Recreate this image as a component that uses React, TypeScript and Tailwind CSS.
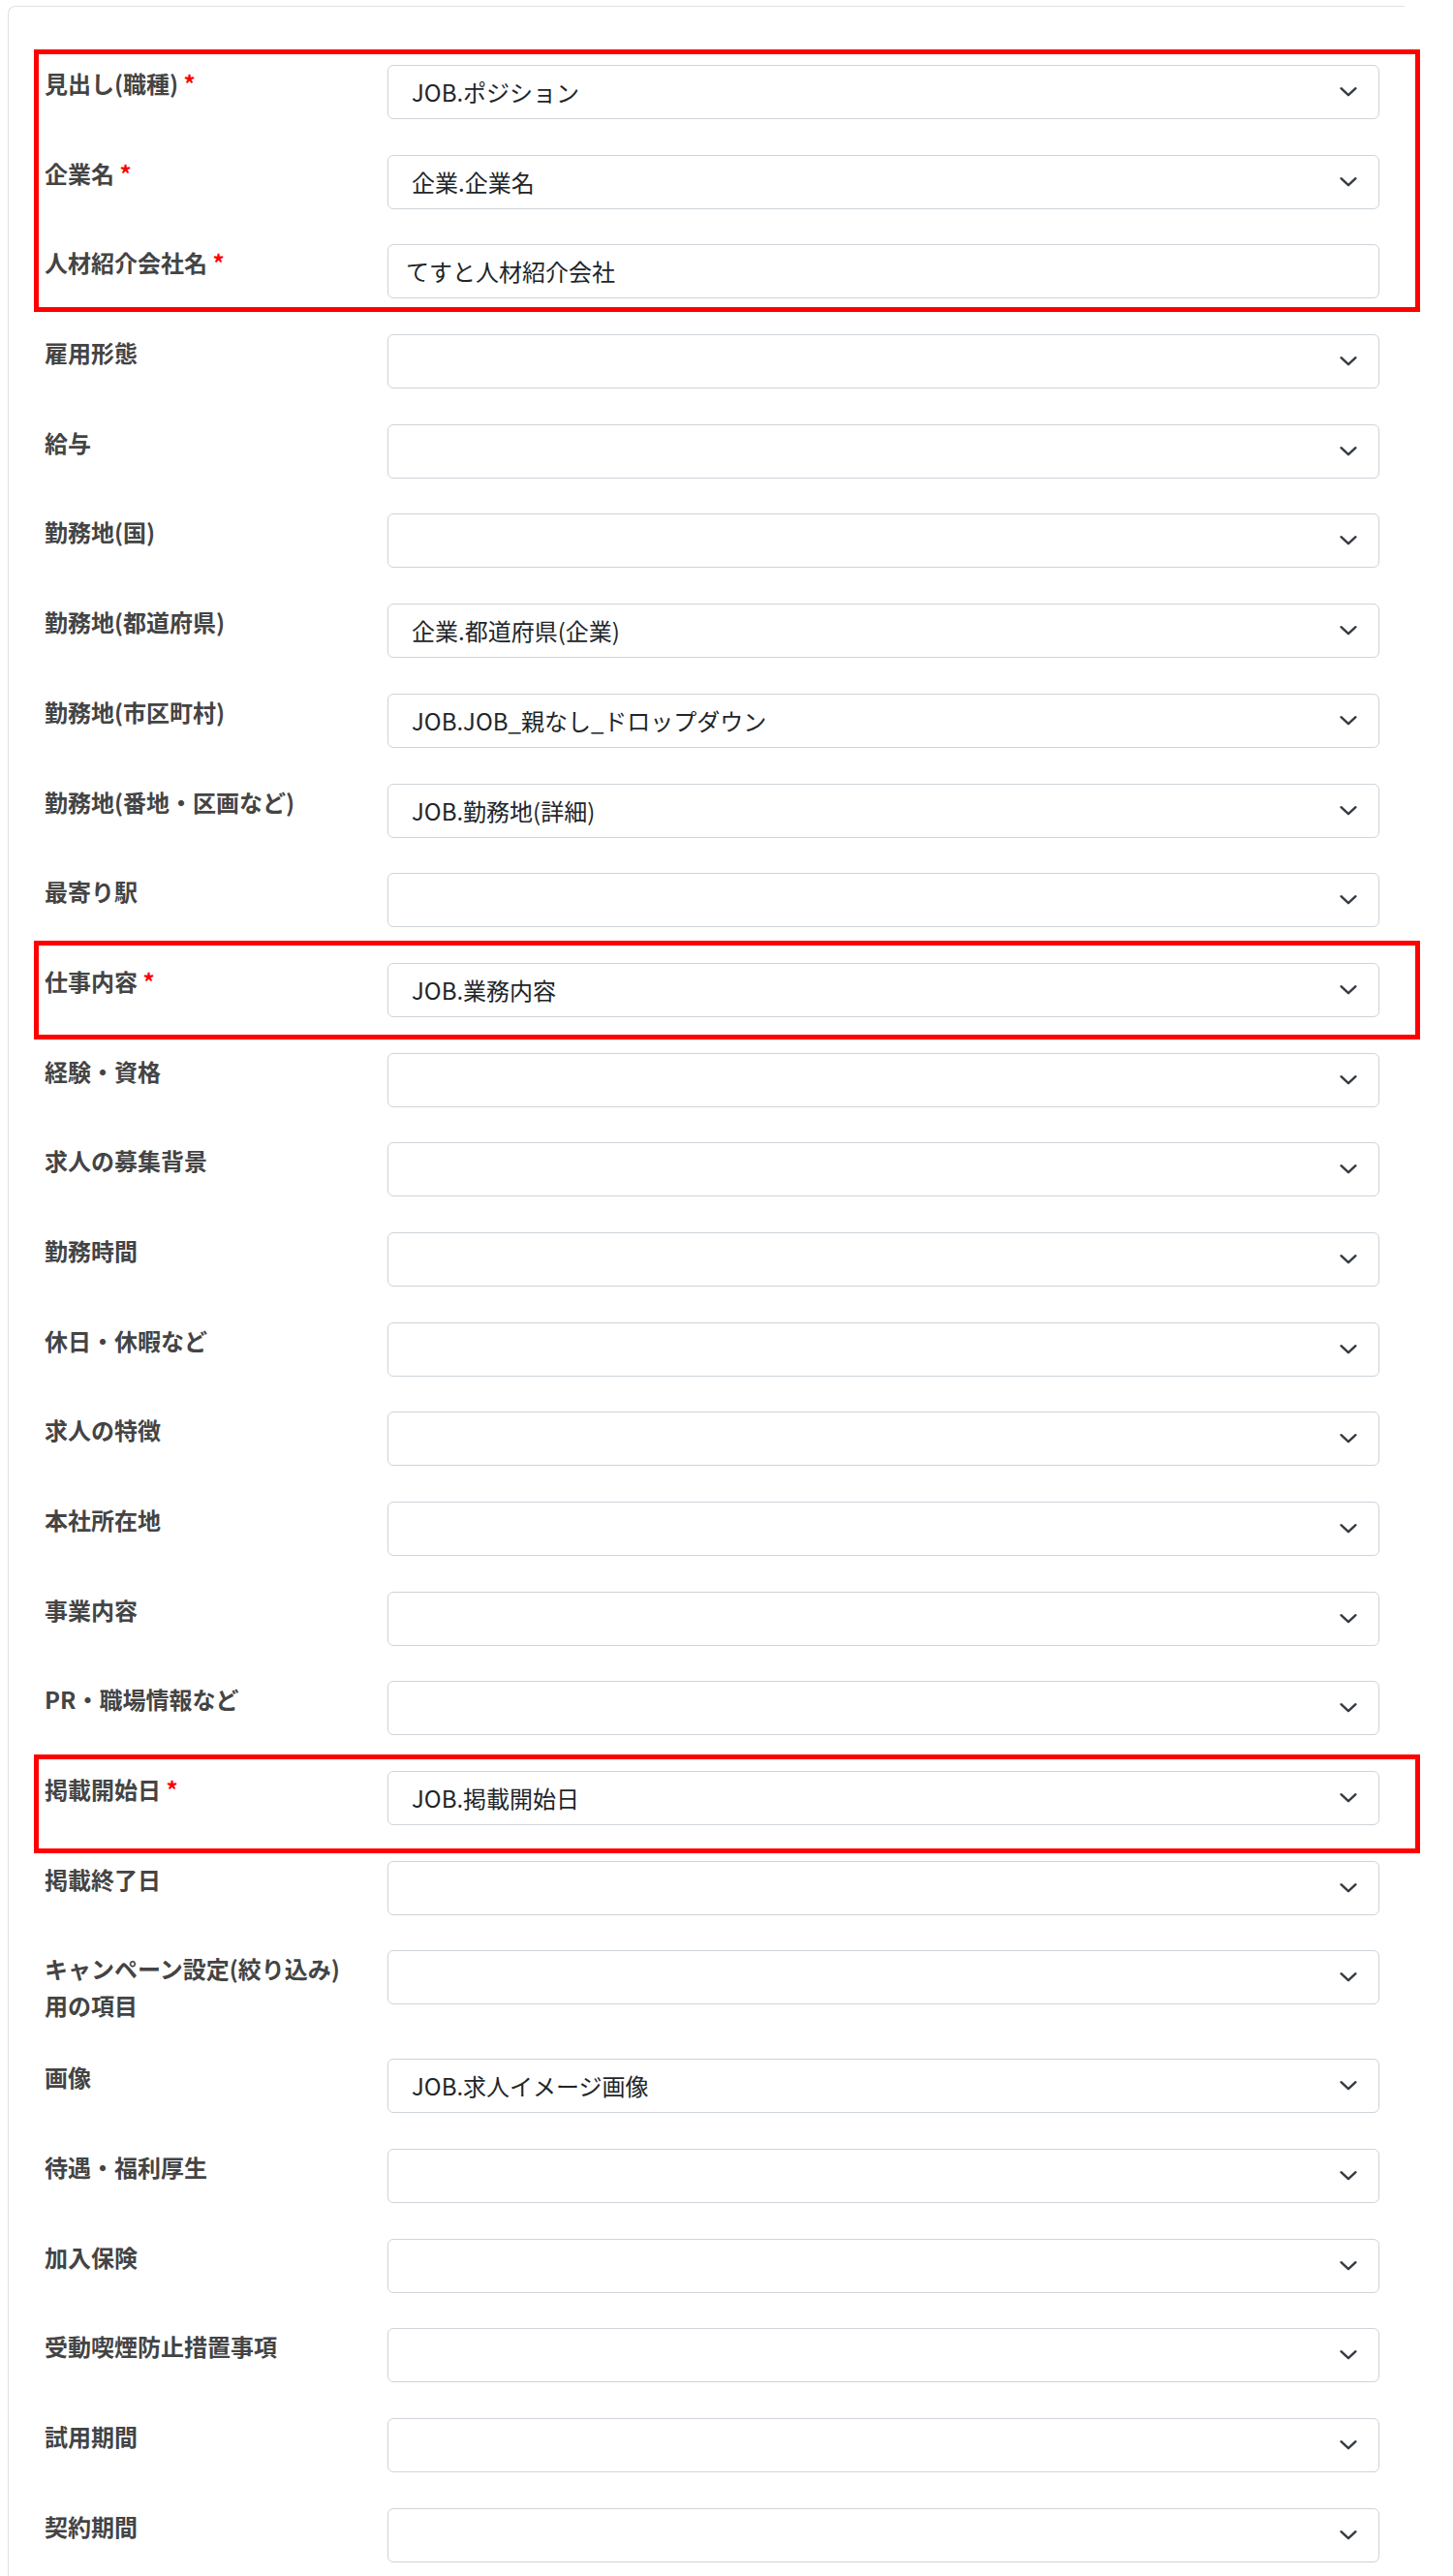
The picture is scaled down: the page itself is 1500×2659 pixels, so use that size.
import React from "react";

type Row = {
  label: React.ReactNode;
  value?: string;
  required?: boolean;
  input?: boolean;
};

type Block = {
  rows: Row[];
  // annotation box offsets (px), drawn over the rows
  box?: { top: string; bottom: string };
};

const blocks: Block[] = [
  {
    box: { top: "-top-[16px]", bottom: "-bottom-[14px]" },
    rows: [
      { label: "見出し(職種)", required: true, value: "JOB.ポジション" },
      { label: "企業名", required: true, value: "企業.企業名" },
      { label: "人材紹介会社名", required: true, value: "てすと人材紹介会社", input: true },
    ],
  },
  {
    rows: [
      { label: "雇用形態" },
      { label: "給与" },
      { label: "勤務地(国)" },
      { label: "勤務地(都道府県)", value: "企業.都道府県(企業)" },
      { label: "勤務地(市区町村)", value: "JOB.JOB_親なし_ドロップダウン" },
      { label: "勤務地(番地・区画など)", value: "JOB.勤務地(詳細)" },
      { label: "最寄り駅" },
    ],
  },
  {
    box: { top: "-top-[23px]", bottom: "-bottom-[23px]" },
    rows: [{ label: "仕事内容", required: true, value: "JOB.業務内容" }],
  },
  {
    rows: [
      { label: "経験・資格" },
      { label: "求人の募集背景" },
      { label: "勤務時間" },
      { label: "休日・休暇など" },
      { label: "求人の特徴" },
      { label: "本社所在地" },
      { label: "事業内容" },
      { label: "PR・職場情報など" },
    ],
  },
  {
    box: { top: "-top-[17px]", bottom: "-bottom-[29px]" },
    rows: [{ label: "掲載開始日", required: true, value: "JOB.掲載開始日" }],
  },
  {
    rows: [
      { label: "掲載終了日" },
      {
        label: (
          <>
            キャンペーン設定(絞り込み)
            <br />
            用の項目
          </>
        ),
      },
      { label: "画像", value: "JOB.求人イメージ画像" },
      { label: "待遇・福利厚生" },
      { label: "加入保険" },
      { label: "受動喫煙防止措置事項" },
      { label: "試用期間" },
      { label: "契約期間" },
    ],
  },
];

function Chevron() {
  return (
    <svg width="20" height="12" viewBox="0 0 20 12" fill="none" className="shrink-0">
      <path d="M2.5 2.2L10 9.2L17.5 2.2" stroke="#343a40" strokeWidth="2.4" strokeLinecap="round" strokeLinejoin="round" />
    </svg>
  );
}

function FieldRow({ row }: { row: Row }) {
  return (
    <div className="flex items-start">
      <label className="w-[354px] shrink-0 text-[24px] leading-[37.6px] font-bold text-[#444]">
        {row.label}
        {row.required && <span className="text-[#ff0000]"> *</span>}
      </label>
      {row.input ? (
        <div className="flex h-[56px] flex-1 items-center rounded-[6px] border border-[#ced4da] bg-white pl-[18px] text-[24px] text-[#212529]">
          {row.value}
        </div>
      ) : (
        <div className="flex h-[56px] flex-1 items-center justify-between rounded-[6px] border border-[#ced4da] bg-white pl-[24px] pr-[21px] text-[24px] text-[#212529]">
          <span>{row.value ?? ""}</span>
          <Chevron />
        </div>
      )}
    </div>
  );
}

export default function App() {
  return (
    <div
      className="min-h-[2659px] bg-white pl-[8px] pt-[6px]"
      style={{ fontFamily: '"Noto Sans CJK JP", "Noto Sans", sans-serif' }}
    >
      <div className="w-[1442px] rounded-tl-[8px] border-l border-t border-[#dee2e6] pb-[40px] pl-[37px] pr-[26px] pt-[60px]">
        <div className="flex flex-col gap-[36.7px]">
          {blocks.map((block, i) => (
            <div key={i} className="relative flex flex-col gap-[36.7px]">
              {block.box && (
                <div
                  className={`pointer-events-none absolute -left-[11px] -right-[42px] border-[5px] border-[#ff0000] ${block.box.top} ${block.box.bottom}`}
                />
              )}
              {block.rows.map((row, j) => (
                <FieldRow key={j} row={row} />
              ))}
            </div>
          ))}
        </div>
      </div>
    </div>
  );
}
